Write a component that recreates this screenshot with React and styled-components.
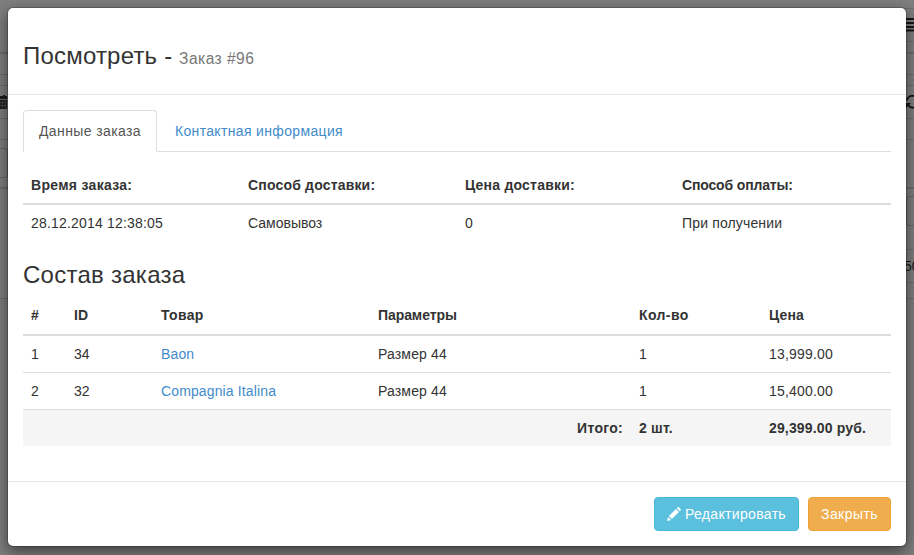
import React from 'react';
import styled, { createGlobalStyle } from 'styled-components';

const GlobalStyle = createGlobalStyle`
  * { box-sizing: border-box; }
  body {
    margin: 0;
    background: #7f7f7f;
    color: #333;
    font: 14px/20px "Liberation Sans", Arial, sans-serif;
    overflow: hidden;
  }
`;

const Screen = styled.div`
  display: grid;
  width: 914px;
  height: 555px;
  overflow: hidden;
  > * { grid-area: 1 / 1; }
`;

const Behind = styled.div`
  display: flex;
  justify-content: space-between;
`;

const Edge = styled.div`
  width: ${p => p.$w}px;
  overflow: hidden;
`;

const Strip = styled.div`
  display: flex;
  align-items: center;
  height: ${p => p.$h}px;
  overflow: hidden;
  white-space: nowrap;
  color: #191919;
  border-bottom: ${p => p.$line || 1}px solid #6e6e6e;
  svg { flex: none; }
`;

const FieldEnd = styled.div`
  flex: none;
  width: 8px;
  height: 30px;
  margin-bottom: ${p => (p.$right ? 16 : 1)}px;
  margin-left: ${p => (p.$right ? 2 : 0)}px;
  border: 1px solid #666;
  border-left-width: ${p => (p.$right ? 1 : 0)}px;
  border-right-width: ${p => (p.$right ? 0 : 1)}px;
  border-radius: ${p => (p.$right ? '4px 0 0 4px' : '0 4px 4px 0')};
`;

const IconSlot = styled.span`
  display: flex;
  padding: 0 0 ${p => p.$lift || 0}px ${p => p.$left || 0}px;
`;

const Modal = styled.div`
  width: 900px;
  height: 540px;
  margin: 7px 0 0 7px;
  display: flex;
  flex-direction: column;
  background: #fff;
  background-clip: padding-box;
  border: 1px solid rgba(0, 0, 0, 0.2);
  border-radius: 6px;
  box-shadow: 0 5px 15px rgba(0, 0, 0, 0.5);
`;

const Header = styled.header`
  height: 87px;
  padding: 35px 15px 0;
  border-bottom: 1px solid #e5e5e5;
`;

const Fit = styled.span`
  letter-spacing: ${p => p.$ls}px;
  white-space: nowrap;
`;

const Title = styled.h3`
  margin: 0;
  font-size: 24px;
  line-height: 26px;
  font-weight: 400;
  small {
    font-size: 15.6px;
    color: #777;
  }
`;

const Body = styled.main`
  flex: 1;
  padding: 15px;
`;

const Tabs = styled.nav`
  display: flex;
  gap: 2px;
  height: 42px;
  border-bottom: 1px solid #ddd;
`;

const Tab = styled.a`
  height: 42px;
  padding: 10px 15px;
  border: 1px solid ${p => (p.$active ? '#ddd' : 'transparent')};
  border-bottom-color: ${p => (p.$active ? '#fff' : 'transparent')};
  border-radius: 4px 4px 0 0;
  color: ${p => (p.$active ? '#555' : '#428bca')};
`;

const Table = styled.table`
  width: 868px;
  table-layout: fixed;
  border-collapse: separate;
  border-spacing: 0;
  margin-top: ${p => p.$top}px;
  th, td {
    padding: 8px;
    text-align: left;
    white-space: nowrap;
  }
  td {
    height: 37px;
    border-top: 1px solid #ddd;
  }
  thead th {
    height: 38px;
    padding-top: ${p => p.$headTop}px;
    padding-bottom: ${p => 16 - p.$headTop}px;
    border-bottom: 2px solid #ddd;
  }
  tbody tr:first-child td {
    height: 36px;
    border-top: 0;
  }
  tfoot td {
    font-weight: 700;
    background: #f5f5f5;
  }
  tfoot td:first-child { text-align: right; }
`;

const Col = styled.col`
  width: ${p => p.$w}px;
`;

const Section = styled.h3`
  margin: 21px 0 0;
  font-size: 24px;
  line-height: 26px;
  font-weight: 400;
`;

const Link = styled.a`
  color: #428bca;
`;

const Footer = styled.footer`
  display: flex;
  justify-content: flex-end;
  gap: 9px;
  height: 65px;
  padding: 15px;
  border-top: 1px solid #e5e5e5;
`;

const Button = styled.button`
  display: flex;
  align-items: center;
  justify-content: center;
  gap: 4px;
  width: ${p => p.$w}px;
  height: 34px;
  padding: 0;
  font: inherit;
  color: #fff;
  border: 1px solid ${p => (p.$warning ? '#eea236' : '#46b8da')};
  border-radius: 4px;
  background: ${p => (p.$warning ? '#f0ad4e' : '#5bc0de')};
`;

const Pencil = () => (
  <svg width="14" height="14" viewBox="0 0 14 14" fill="#fff">
    <path d="M0 14 1.1 9.9 4.1 12.9ZM1.9 9.1 9 2 12 5 4.9 12.1ZM9.8 1.2 10.7.3Q11.2-.2 11.8.3L13.7 2.2Q14.2 2.8 13.7 3.3L12.8 4.2Z" />
  </svg>
);

const Calendar = () => (
  <svg width="8" height="14" viewBox="0 0 8 14">
    <path d="M0 1H3V0H5V1H7V14H0Z" fill="#1d1d1d" />
    <path d="M0 4.5H7" stroke="#707070" />
    <path d="M0 7.5H6M0 10.5H6M2.5 6V13M5.5 6V13" stroke="#505050" strokeWidth=".7" />
  </svg>
);

const Burger = () => (
  <svg width="8" height="14" viewBox="0 0 8 14">
    <path d="M0 1H8M0 5H8M0 9H8M0 12.5H8" stroke="#151515" strokeWidth="2" />
  </svg>
);

const Refresh = () => (
  <svg width="8" height="14" viewBox="0 0 8 14" fill="none" stroke="#151515">
    <path d="M.7 5.5C1.5 1.5 5 .5 8 1M2 10C4 12.5 6 13 8 12.6" strokeWidth="1.9" />
    <path d="M0 8H5L0 13Z" fill="#151515" stroke="none" />
  </svg>
);

const T = ({ s = 0, children }) => <Fit $ls={s}>{children}</Fit>;

const details = [
  ['Время заказа:', 0.3, '28.12.2014 12:38:05', 0.19],
  ['Способ доставки:', 0.18, 'Самовывоз', 0],
  ['Цена доставки:', 0.22, '0', 0],
  ['Способ оплаты:', -0.15, 'При получении', 0.15],
];

const columns = [
  ['#', 0, 43], ['ID', 0.2, 87], ['Товар', 0.35, 217],
  ['Параметры', -0.08, 261], ['Кол-во', 0.4, 130], ['Цена', 0.1, 130],
];

const items = [
  ['1', '34', 'Baon', '13,999.00'],
  ['2', '32', 'Compagnia Italina', '15,400.00'],
];

export default function App() {
  return (
    <>
      <GlobalStyle />
      <Screen>
        <Behind>
          <Edge $w={8}>
            <Strip $h={54} $line={2} />
            <Strip $h={21} />
            <Strip $h={11} />
            <Strip $h={33}><IconSlot><Calendar /></IconSlot></Strip>
            <Strip $h={21} />
            <Strip $h={49} $line={2}><FieldEnd /></Strip>
            <Strip $h={110} />
          </Edge>
          <Edge $w={10}>
            <Strip $h={9} />
            <Strip $h={33}><IconSlot $left={2}><Burger /></IconSlot></Strip>
            <Strip $h={12} $line={2} />
            <Strip $h={21} />
            <Strip $h={11} />
            <Strip $h={33}><IconSlot $left={2} $lift={1}><Refresh /></IconSlot></Strip>
            <Strip $h={21} />
            <Strip $h={49} $line={2} />
            <Strip $h={61}><FieldEnd $right /></Strip>
            <Strip $h={33}>50</Strip>
            <Strip $h={16} />
          </Edge>
        </Behind>
        <Modal>
          <Header>
            <Title><T s={0.2}>Посмотреть -</T> <small><T s={0.45}>Заказ #96</T></small></Title>
          </Header>
          <Body>
            <Tabs>
              <Tab $active><T s={0.385}>Данные заказа</T></Tab>
              <Tab><T s={0.34}>Контактная информация</T></Tab>
            </Tabs>
            <Table $top={15} $headTop={8}>
              <thead><tr>{details.map(d => <th key={d[0]}><T s={d[1]}>{d[0]}</T></th>)}</tr></thead>
              <tbody><tr>{details.map(d => <td key={d[0]}><T s={d[3]}>{d[2]}</T></td>)}</tr></tbody>
            </Table>
            <Section><T s={0.26}>Состав заказа</T></Section>
            <Table $top={10} $headTop={7}>
              <colgroup>{columns.map(c => <Col key={c[0]} $w={c[2]} />)}</colgroup>
              <thead><tr>{columns.map(c => <th key={c[0]}><T s={c[1]}>{c[0]}</T></th>)}</tr></thead>
              <tbody>
                {items.map(([n, id, name, price]) => (
                  <tr key={n}>
                    <td>{n}</td>
                    <td>{id}</td>
                    <td><Link><T s={0.13}>{name}</T></Link></td>
                    <td><T s={0.15}>Размер 44</T></td>
                    <td>1</td>
                    <td><T s={0.2}>{price}</T></td>
                  </tr>
                ))}
              </tbody>
              <tfoot>
                <tr>
                  <td colSpan={4}><T s={0.3}>Итого:</T></td>
                  <td><T s={0.2}>2 шт.</T></td>
                  <td><T s={0.15}>29,399.00 руб.</T></td>
                </tr>
              </tfoot>
            </Table>
          </Body>
          <Footer>
            <Button $w={145}><Pencil /><T s={0.33}>Редактировать</T></Button>
            <Button $w={83} $warning><T s={0.44}>Закрыть</T></Button>
          </Footer>
        </Modal>
      </Screen>
    </>
  );
}
